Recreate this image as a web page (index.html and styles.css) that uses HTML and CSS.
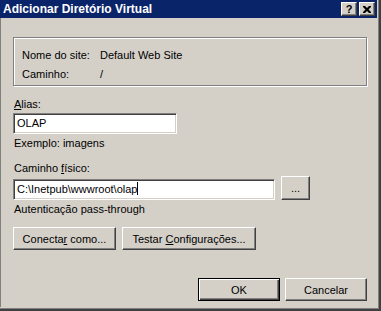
FILE: index.html
```html
<!doctype html>
<html lang="pt">
<head>
  <meta charset="utf-8" />
  <title>Adicionar Diretório Virtual</title>
  <link rel="stylesheet" href="styles.css">
</head>
<body>

<div class="dialog">
  <div class="titlebar">
    <span class="title">Adicionar Diretório Virtual</span>
    <span class="caption-buttons">
      <span class="cap help">?</span>
      <span class="cap close">
        <svg width="8" height="7" viewBox="0 0 8 7">
          <path d="M0 0h2l2 2l2 -2h2v1l-2.5 2.5l2.5 2.5v1h-2l-2 -2l-2 2h-2v-1l2.5 -2.5l-2.5 -2.5z" fill="#000"/>
        </svg>
      </span>
    </span>
  </div>

  <div class="content">
    <div class="group">
      <span>Nome do site:</span><span>Default Web Site</span>
      <span>Caminho:</span><span>/</span>
    </div>

    <div class="label"><u>A</u>lias:</div>
    <div class="textbox alias">OLAP</div>
    <div class="note">Exemplo: imagens</div>

    <div class="label">Caminho <u>f</u>ísico:</div>
    <div class="path-row">
      <div class="textbox path">C:\Inetpub\wwwroot\olap<span class="caret"></span></div>
      <span class="btn browse"><span>...</span></span>
    </div>
    <div class="note">Autenticação pass-through</div>

    <div class="button-row">
      <span class="btn connect"><span>Conecta<u>r</u> como...</span></span>
      <span class="btn test"><span>Testar <u>C</u>onfigurações...</span></span>
    </div>

    <div class="actions">
      <span class="btn default"><span>OK</span></span>
      <span class="btn"><span>Cancelar</span></span>
    </div>
  </div>
</div>

</body>
</html>
```

FILE: styles.css
```css
body {
  margin: 0;
  font-family: "Liberation Sans", Arial, sans-serif;
  font-size: 11px;
  color: #000;
  background-color: #d4d0c8;
}
.dialog {
  width: 381px;
  height: 311px;
  box-sizing: border-box;
  background-color: #d4d0c8;
  border-right: 2px solid #404040;
  border-bottom: 2px solid #404040;
  box-shadow: inset -1px -1px 0 #808080;
  padding-right: 2px;
  padding-bottom: 2px;
  display: flex;
  flex-direction: column;
}
.titlebar {
  height: 18px;
  background-color: #0a246a;
  color: #fff;
  display: flex;
  align-items: center;
  justify-content: space-between;
  padding: 0 2px 0 3px;
}
.title {
  font-weight: bold;
  font-size: 12px;
}
.caption-buttons {
  display: flex;
  gap: 2px;
}
.cap {
  width: 16px;
  height: 14px;
  box-sizing: border-box;
  background-color: #d4d0c8;
  border: 1px solid;
  border-color: #fff #404040 #404040 #fff;
  box-shadow: inset -1px -1px 0 #808080;
  color: #000;
  display: flex;
  align-items: center;
  justify-content: center;
  font-weight: bold;
  font-size: 11px;
  line-height: 1;
}
.content {
  flex: 1;
  padding: 19px 10px 0 13px;
  border-left: 1px solid #808080;
  display: flex;
  flex-direction: column;
  align-items: flex-start;
}
.group {
  align-self: stretch;
  height: 49px;
  box-sizing: border-box;
  border: 1px solid #808080;
  box-shadow: inset 1px 1px 0 #fff, 1px 1px 0 #fff;
  padding: 9px 0 0 8px;
  display: grid;
  grid-template-columns: 78px auto;
  line-height: 17px;
  margin-left: -1px;
}
.label,
.note {
  line-height: 14px;
}
.label {
  margin-top: 11px;
  margin-bottom: 2px;
}
.note {
  margin-top: 2px;
}
.textbox {
  height: 21px;
  box-sizing: border-box;
  background-color: #fff;
  border: 1px solid;
  border-color: #808080 #fff #fff #808080;
  box-shadow: inset 1px 1px 0 #404040, inset -1px -1px 0 #d4d0c8;
  padding: 0 3px;
  line-height: 19px;
  white-space: nowrap;
  margin-left: -1px;
}
.alias {
  width: 164px;
}
.path-row {
  display: flex;
  align-items: flex-end;
  gap: 6px;
  margin-top: -1px;
}
.path {
  width: 262px;
}
.caret {
  display: inline-block;
  width: 1px;
  height: 13px;
  background-color: #000;
  vertical-align: -2px;
}
.btn {
  height: 23px;
  box-sizing: border-box;
  border: 1px solid;
  border-color: #fff #404040 #404040 #fff;
  box-shadow: inset -1px -1px 0 #808080;
  display: flex;
  align-items: center;
  justify-content: center;
  white-space: nowrap;
}
.browse {
  width: 29px;
  height: 24px;
}
.button-row {
  display: flex;
  gap: 6px;
  margin-top: 11px;
  margin-left: -1px;
}
.connect {
  width: 103px;
}
.test {
  width: 134px;
}
.actions {
  align-self: stretch;
  display: flex;
  justify-content: flex-end;
  gap: 5px;
  margin-top: 28px;
}
.actions .btn {
  width: 82px;
}
.btn.default {
  border: 1px solid #000;
  box-shadow: inset 1px 1px 0 #fff, inset -1px -1px 0 #404040, inset -2px -2px 0 #808080;
}
```
